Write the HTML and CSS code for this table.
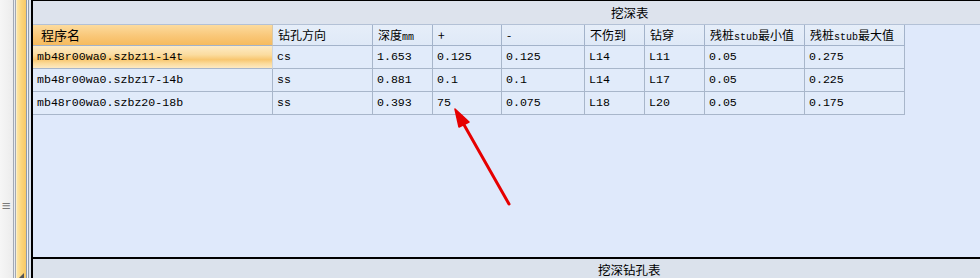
FILE: index.html
```html
<!DOCTYPE html>
<html lang="zh-CN">
<head>
<meta charset="utf-8">
<title>挖深表</title>
<link rel="stylesheet" href="styles.css">
</head>
<body>
<div class="app">
  <aside class="side">
    <div class="side-grey"><span class="grip">≡</span></div>
    <div class="line-a"></div>
    <div class="line-b"></div>
    <div class="line-a"></div>
    <div class="yellow"><span class="corner"></span></div>
    <div class="line-c"></div>
    <div class="line-d"></div>
    <div class="line-c"></div>
    <div class="line-e"></div>
  </aside>
  <main class="main">
    <div class="panel-title top-title">挖深表</div>
    <div class="area">
      <div class="grid">
        <div class="hcell sel">程序名</div>
        <div class="hcell">钻孔方向</div>
        <div class="hcell">深度<span class="mm">mm</span></div>
        <div class="hcell">+</div>
        <div class="hcell">-</div>
        <div class="hcell">不伤到</div>
        <div class="hcell">钻穿</div>
        <div class="hcell">残桩<span class="mm">stub</span>最小值</div>
        <div class="hcell">残桩<span class="mm">stub</span>最大值</div>

        <div class="cell selrow">mb48r00wa0.szbz11-14t</div>
        <div class="cell">cs</div>
        <div class="cell">1.653</div>
        <div class="cell">0.125</div>
        <div class="cell">0.125</div>
        <div class="cell">L14</div>
        <div class="cell">L11</div>
        <div class="cell">0.05</div>
        <div class="cell">0.275</div>

        <div class="cell">mb48r00wa0.szbz17-14b</div>
        <div class="cell">ss</div>
        <div class="cell">0.881</div>
        <div class="cell">0.1</div>
        <div class="cell">0.1</div>
        <div class="cell">L14</div>
        <div class="cell">L17</div>
        <div class="cell">0.05</div>
        <div class="cell">0.225</div>

        <div class="cell">mb48r00wa0.szbz20-18b</div>
        <div class="cell">ss</div>
        <div class="cell">0.393</div>
        <div class="cell">75</div>
        <div class="cell">0.075</div>
        <div class="cell">L18</div>
        <div class="cell">L20</div>
        <div class="cell">0.05</div>
        <div class="cell">0.175</div>
      </div>
      <svg class="arrow" width="80" height="120" viewBox="0 0 80 120">
        <line x1="74" y1="105" x2="28" y2="24" stroke="#e60000" stroke-width="3" stroke-linecap="round"/>
        <polygon points="20,10 34,23 24,28" fill="#e60000" stroke="#e60000" stroke-width="1.5" stroke-linejoin="round"/>
      </svg>
    </div>
    <div class="panel-title bottom-title">挖深钻孔表</div>
  </main>
</div>
</body>
</html>
```

FILE: styles.css
```css
html, body {
  margin: 0;
  padding: 0;
  width: 980px;
  height: 278px;
  overflow: hidden;
  background: #eef0f4;
}

.app {
  display: flex;
  width: 980px;
  height: 278px;
  font-family: "Noto Sans CJK SC", "Liberation Sans", sans-serif;
  font-size: 12px;
  color: #000;
}

.side {
  display: flex;
  flex: 0 0 31px;
  height: 278px;
}

.side-grey {
  width: 13px;
  background: linear-gradient(to right, #f6f6f6, #ececec);
  display: flex;
  align-items: flex-start;
  justify-content: center;
  padding-top: 199px;
  box-sizing: border-box;
}

.grip {
  font-family: "DejaVu Sans", sans-serif;
  font-size: 13px;
  line-height: 14px;
  color: #7a7a7a;
  transform: scaleX(0.9);
}

.line-a { width: 1px; background: #a2a9b4; }
.line-b { width: 1px; background: #e6eaf0; }
.line-c { width: 1px; background: #8f9bac; }
.line-d { width: 1px; background: #eef1f6; }
.line-e { width: 2px; background: #dde5ef; }

.yellow {
  width: 9px;
  background: linear-gradient(to right, #fde6a6, #fcd67c 45%, #f8c965);
  position: relative;
  border-left: 1px solid #fbeec8;
}

.corner {
  position: absolute;
  left: 2px;
  bottom: 0;
  width: 0;
  height: 0;
  border-left: 5px solid transparent;
  border-bottom: 5px solid #555;
}

.main {
  flex: 1;
  display: flex;
  flex-direction: column;
  border-left: 2px solid #000;
  border-top: 1px solid #000;
  min-width: 0;
}

.panel-title {
  box-sizing: border-box;
  background: #dde3ed;
  font-size: 12.5px;
  white-space: nowrap;
}

.top-title {
  height: 24px;
  line-height: 23px;
  padding-left: 578px;
  border-bottom: 1px solid #b3c1d6;
}

.bottom-title {
  height: 21px;
  line-height: 22px;
  padding-left: 565px;
  background: #dbe2ec;
  border-top: 2px solid #000;
}

.area {
  flex: 1;
  background: #dfe9fb;
  position: relative;
}

.grid {
  display: grid;
  grid-template-columns: 240px 100px 60px 69px 83px 60px 60px 100px 100px;
  grid-auto-rows: 23px;
  grid-template-rows: 21px;
  width: 872px;
}

.hcell {
  box-sizing: border-box;
  border-right: 1px solid #a3b3ca;
  border-bottom: 1px solid #a3b3ca;
  background: linear-gradient(#e6eef9, #dfe9f7);
  padding-left: 5px;
  line-height: 20px;
  white-space: nowrap;
  overflow: hidden;
}

.hcell.sel {
  background: linear-gradient(#fcdb9e, #f9c778 55%, #f6bb5e);
  padding-left: 8px;
  font-size: 13px;
  border-right-color: #d8c8a8;
}

.mm {
  font-family: "Liberation Mono", monospace;
  font-size: 10px;
}

.cell {
  box-sizing: border-box;
  border-right: 1px solid #a8b6ca;
  border-bottom: 1px solid #a8b6ca;
  background: #e1ebfa;
  padding-left: 4px;
  line-height: 22px;
  font-family: "Liberation Mono", monospace;
  font-size: 11.6px;
  white-space: nowrap;
  overflow: hidden;
}

.cell.selrow {
  background: linear-gradient(#fdebc6, #fbdc9f 40%, #f8c670 62%, #fbdb9c 80%, #fde9c2);
  border-right-color: #cfd6de;
}

.arrow {
  position: absolute;
  left: 402px;
  top: 74px;
}
```
